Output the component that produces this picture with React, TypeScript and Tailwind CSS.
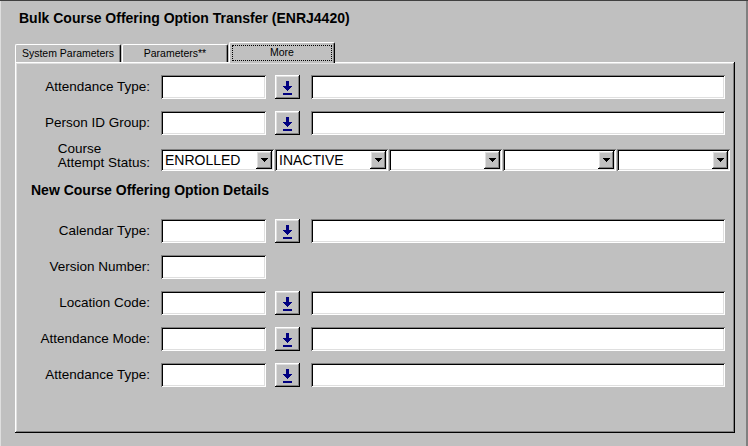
import React from "react";

const sunken =
  "shadow-[inset_1px_1px_0_#808080,inset_-1px_-1px_0_#ffffff,inset_2px_2px_0_#000000,inset_-2px_-2px_0_#dfdfdf]";
const raised =
  "shadow-[inset_-1px_-1px_0_#000000,inset_1px_1px_0_#ffffff,inset_-2px_-2px_0_#808080,inset_2px_2px_0_#dfdfdf]";

function DownIcon() {
  return (
    <svg width="9" height="14" viewBox="0 0 9 14" shapeRendering="crispEdges">
      <rect x="3" y="0" width="3" height="6" fill="#000080" />
      <polygon points="0,5 9,5 4.5,10" fill="#000080" />
      <rect x="0" y="12" width="9" height="2" fill="#000080" />
    </svg>
  );
}

function Field({ w }: { w: string }) {
  return <div className={`h-[24px] bg-white ${sunken} ${w}`} />;
}

function LovButton() {
  return (
    <div className={`ml-[9px] flex h-[24px] w-[25px] items-start justify-center bg-[#c0c0c0] pt-[6px] ${raised}`}>
      <DownIcon />
    </div>
  );
}

function Row({ label, lov = true, first = false }: { label: string; lov?: boolean; first?: boolean }) {
  return (
    <div className={`flex h-[24px] items-center ${first ? "" : "mt-[12px]"}`}>
      <div className="w-[135px] text-right text-[13.5px] leading-[16px] text-black">{label}</div>
      <div className="ml-[11px]">
        <Field w="w-[105px]" />
      </div>
      {lov && (
        <>
          <LovButton />
          <div className="ml-[11px]">
            <Field w="w-[414px]" />
          </div>
        </>
      )}
    </div>
  );
}

function Select({ value }: { value: string }) {
  return (
    <div className={`flex h-[22px] w-[113px] items-center bg-white p-[2px] ${sunken}`}>
      <div className="flex-1 pl-[2px] text-[14px] leading-[18px] text-black">{value}</div>
      <div className={`flex h-[18px] w-[16px] items-center justify-center bg-[#c0c0c0] ${raised}`}>
        <svg width="7" height="4" viewBox="0 0 7 4" shapeRendering="crispEdges">
          <polygon points="0,0 7,0 3.5,4" fill="#000" />
        </svg>
      </div>
    </div>
  );
}

export default function App() {
  return (
    <div className="relative h-[446px] w-[748px] overflow-hidden bg-[#c0c0c0] font-['Liberation_Sans',Arial,sans-serif] shadow-[inset_0_1px_0_#404040,inset_1px_0_0_#dfdfdf,inset_-2px_0_0_#808080]">
      <div className="h-[42px] pl-[19px] pt-[10px] text-[14px] font-bold leading-[17px] text-black">
        Bulk Course Offering Option Transfer (ENRJ4420)
      </div>
      <div className="flex h-[20px] items-end pl-[15px]">
        <div className="flex h-[18px] w-[106px] items-center justify-center rounded-tl-[2px] rounded-tr-[2px] border-l border-t border-r border-l-white border-t-white border-r-black text-[10.5px] text-black shadow-[inset_-1px_0_0_#808080]">
          System Parameters
        </div>
        <div className="ml-[1px] flex h-[18px] w-[106px] items-center justify-center rounded-tl-[2px] rounded-tr-[2px] border-l border-t border-r border-l-white border-t-white border-r-black text-[10.5px] text-black shadow-[inset_-1px_0_0_#808080]">
          Parameters**
        </div>
        <div className="relative z-10 -mb-[1px] ml-[1px] flex h-[21px] w-[106px] items-start justify-center rounded-tl-[2px] rounded-tr-[2px] border-l border-t border-r border-l-white border-t-white border-r-black bg-[#c0c0c0] px-[2px] pt-[2px] text-[10.5px] text-black shadow-[inset_-1px_0_0_#808080]">
          <div className="flex h-[16px] w-full items-center justify-center border border-dotted border-black">More</div>
        </div>
      </div>
      <div className={`ml-[15px] h-[371px] w-[720px] pt-[13px] ${raised}`}>
        <Row label="Attendance Type:" first />
        <Row label="Person ID Group:" />
        <div className="mt-[14px] flex h-[22px] items-end">
          <div className="flex w-[135px] justify-end pb-[1px]">
            <div className="text-left text-[13.5px] leading-[14px] text-black">
              Course
              <br />
              Attempt Status:
            </div>
          </div>
          <div className="ml-[11px] flex gap-[1px]">
            <Select value="ENROLLED" />
            <Select value="INACTIVE" />
            <Select value="" />
            <Select value="" />
            <Select value="" />
          </div>
        </div>
        <div className="mt-[11px] pl-[16px] text-[14px] font-bold leading-[16px] text-black">
          New Course Offering Option Details
        </div>
        <div className="mt-[21px]">
          <Row label="Calendar Type:" first />
          <Row label="Version Number:" lov={false} />
          <Row label="Location Code:" />
          <Row label="Attendance Mode:" />
          <Row label="Attendance Type:" />
        </div>
      </div>
    </div>
  );
}
